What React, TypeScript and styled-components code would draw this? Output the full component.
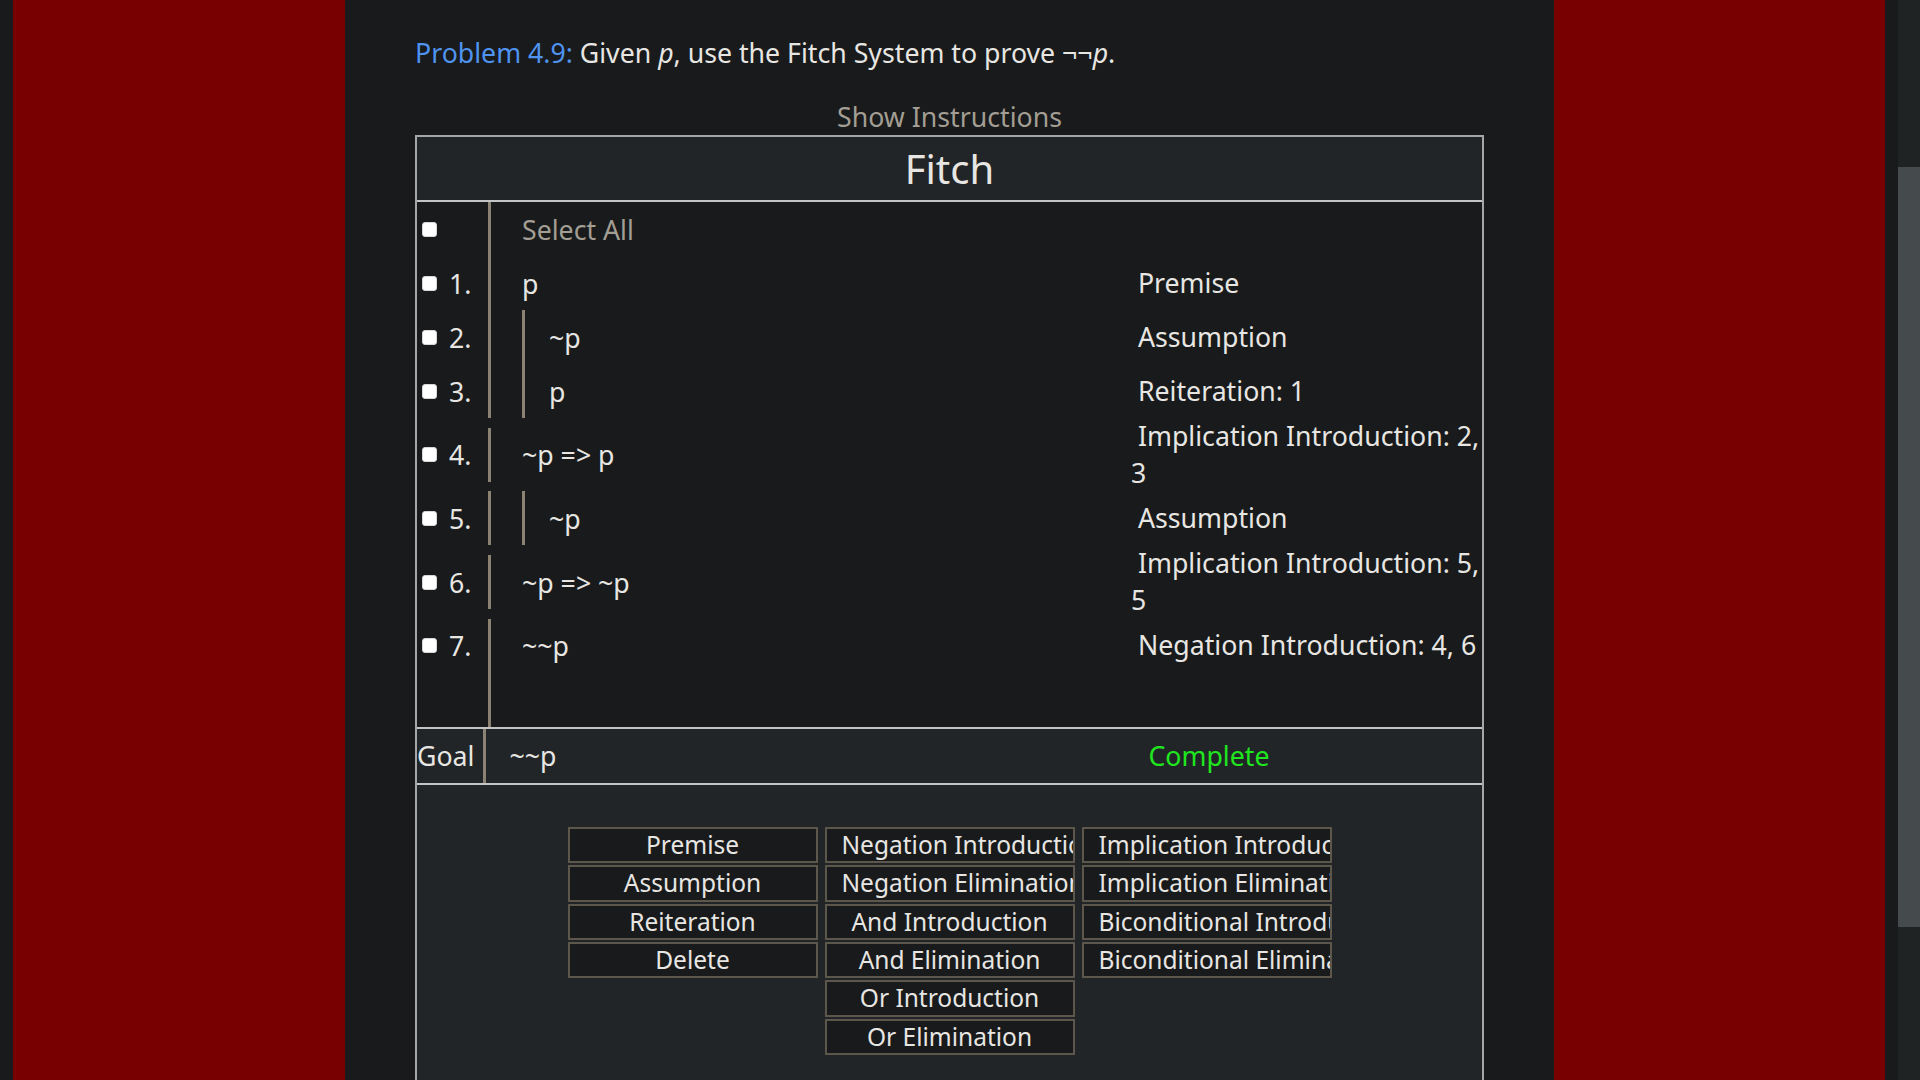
import styled, { createGlobalStyle } from "styled-components";

type Step = {
  n: number;
  formula: string;
  depth: number;
  rule: string;
};

const steps: Step[] = [
  { n: 1, formula: "p", depth: 0, rule: "Premise" },
  { n: 2, formula: "~p", depth: 1, rule: "Assumption" },
  { n: 3, formula: "p", depth: 1, rule: "Reiteration: 1" },
  { n: 4, formula: "~p => p", depth: 0, rule: "Implication Introduction: 2, 3" },
  { n: 5, formula: "~p", depth: 1, rule: "Assumption" },
  { n: 6, formula: "~p => ~p", depth: 0, rule: "Implication Introduction: 5, 5" },
  { n: 7, formula: "~~p", depth: 0, rule: "Negation Introduction: 4, 6" },
];

const ruleColumns: string[][] = [
  ["Premise", "Assumption", "Reiteration", "Delete"],
  [
    "Negation Introduction",
    "Negation Elimination",
    "And Introduction",
    "And Elimination",
    "Or Introduction",
    "Or Elimination",
  ],
  [
    "Implication Introduction",
    "Implication Elimination",
    "Biconditional Introduction",
    "Biconditional Elimination",
  ],
];

const BASE = "26.7px";

const GlobalStyle = createGlobalStyle`
  html, body {
    margin: 0;
    padding: 0;
    background: #181a1b;
    overflow: hidden;
  }
  body {
    font-family: "Noto Sans", "Open Sans", sans-serif;
    color: #e8e6e3;
  }
  * { box-sizing: border-box; }
`;

const Page = styled.div`
  display: flex;
  height: 100vh;
  overflow: hidden;
  background: #181a1b;
`;

const Viewport = styled.div`
  flex: 1;
  min-width: 0;
  padding: 0 13px;
`;

const Frame = styled.div`
  display: grid;
  grid-template-columns: 332px 1209px 1fr;
  height: 100%;
  background: #790000;
`;

const Column = styled.main`
  background: #181a1b;
  padding: 34px 70px 0 70px;
  overflow: hidden;
`;

const Title = styled.p`
  margin: 0;
  font-size: ${BASE};
  line-height: normal;
  white-space: nowrap;
`;

const ProblemRef = styled.span`
  color: #4f93ef;
`;

const Var = styled.i`
  font-style: italic;
`;

const ShowInstructions = styled.div`
  width: 1069px;
  margin-top: 27px;
  text-align: center;
  font-size: ${BASE};
  line-height: 37px;
  color: #a39e93;
  cursor: pointer;
`;

const Box = styled.section`
  width: 1069px;
  border: 2px solid #a6a6a6;
  border-bottom: none;
`;

const Header = styled.div`
  height: 65px;
  display: flex;
  align-items: center;
  justify-content: center;
  background: #222527;
  border-bottom: 2px solid #c4c4c4;
  font-size: 40px;
  line-height: normal;
`;

const Proof = styled.div`
  display: flex;
  flex-direction: column;
`;

const Row = styled.div`
  display: flex;
  align-items: center;
  min-height: 54px;
`;

const LeftCell = styled.div`
  width: 71px;
  height: 54px;
  display: flex;
  align-items: center;
  gap: 12px;
  padding-left: 5px;
`;

const Check = styled.input`
  appearance: none;
  width: 15px;
  height: 15px;
  margin: 0;
  flex: none;
  background: #ffffff;
  border: 1px solid #d8d8d8;
  border-radius: 3px;
`;

const LineNo = styled.span`
  font-size: ${BASE};
  line-height: normal;
`;

const FormulaCell = styled.div`
  width: 643px;
  height: 54px;
  display: flex;
  border-left: 3px solid #8c8273;
  padding-left: 31px;
`;

const Nest = styled.div`
  display: flex;
  align-items: center;
  border-left: 3px solid #8c8273;
  padding-left: 24px;
`;

const Formula = styled.span<{ $muted?: boolean }>`
  display: flex;
  align-items: center;
  font-size: ${BASE};
  line-height: normal;
  white-space: pre;
  color: ${(p) => (p.$muted ? "#a39e93" : "#e8e6e3")};
`;

const Justification = styled.div`
  flex: 1;
  min-width: 0;
  font-size: ${BASE};
  line-height: 36.7px;
`;

const GoalRow = styled.div`
  display: flex;
  height: 58px;
  background: #222527;
  border-top: 2px solid #c4c4c4;
  border-bottom: 2px solid #c4c4c4;
`;

const GoalLabel = styled.div`
  display: flex;
  align-items: center;
  padding-right: 9px;
  border-right: 3px solid #8c8273;
  font-size: ${BASE};
`;

const GoalFormula = styled.div`
  width: 662px;
  display: flex;
  align-items: center;
  padding-left: 23px;
  font-size: ${BASE};
`;

const Status = styled.div`
  display: flex;
  align-items: center;
  font-size: ${BASE};
  color: #1fe61f;
`;

const Rules = styled.div`
  display: flex;
  justify-content: center;
  align-items: flex-start;
  gap: 7px;
  background: #222527;
  padding: 42px 0 80px;
`;

const RuleColumn = styled.div`
  width: 250px;
  display: flex;
  flex-direction: column;
  gap: 2px;
`;

const RuleButton = styled.div`
  border: 2px solid #5d574b;
  background: #181a1b;
  color: #e8e6e3;
  font-size: 24.5px;
  line-height: 32.4px;
  text-align: center;
  white-space: nowrap;
  overflow: hidden;
  padding: 0 15px;
  cursor: pointer;
`;

const ScrollTrack = styled.div`
  width: 22px;
  flex: none;
  background: #202324;
  display: flex;
  flex-direction: column;
`;

const ScrollThumb = styled.div`
  margin-top: 167px;
  height: 760px;
  background: #454a4d;
`;

function ProofRow({ step }: { step: Step }) {
  const text = <Formula>{step.formula}</Formula>;
  return (
    <Row>
      <LeftCell>
        <Check type="checkbox" />
        <LineNo>{step.n}.</LineNo>
      </LeftCell>
      <FormulaCell>{step.depth > 0 ? <Nest>{text}</Nest> : text}</FormulaCell>
      <Justification>{"\u00a0" + step.rule}</Justification>
    </Row>
  );
}

export default function App() {
  return (
    <Page>
      <GlobalStyle />
      <Viewport>
        <Frame>
          <div />
          <Column>
            <Title>
              <ProblemRef>Problem 4.9:</ProblemRef> Given <Var>p</Var>, use the Fitch System to
              prove ¬¬<Var>p</Var>.
            </Title>
            <ShowInstructions>Show Instructions</ShowInstructions>
            <Box>
              <Header>Fitch</Header>
              <Proof>
                <Row>
                  <LeftCell>
                    <Check type="checkbox" />
                  </LeftCell>
                  <FormulaCell>
                    <Formula $muted>Select All</Formula>
                  </FormulaCell>
                </Row>
                {steps.map((s) => (
                  <ProofRow key={s.n} step={s} />
                ))}
                <Row>
                  <LeftCell />
                  <FormulaCell />
                </Row>
              </Proof>
              <GoalRow>
                <GoalLabel>Goal</GoalLabel>
                <GoalFormula>~~p</GoalFormula>
                <Status>Complete</Status>
              </GoalRow>
              <Rules>
                {ruleColumns.map((col, i) => (
                  <RuleColumn key={i}>
                    {col.map((r) => (
                      <RuleButton key={r} role="button">
                        {r}
                      </RuleButton>
                    ))}
                  </RuleColumn>
                ))}
              </Rules>
            </Box>
          </Column>
          <div />
        </Frame>
      </Viewport>
      <ScrollTrack>
        <ScrollThumb />
      </ScrollTrack>
    </Page>
  );
}
